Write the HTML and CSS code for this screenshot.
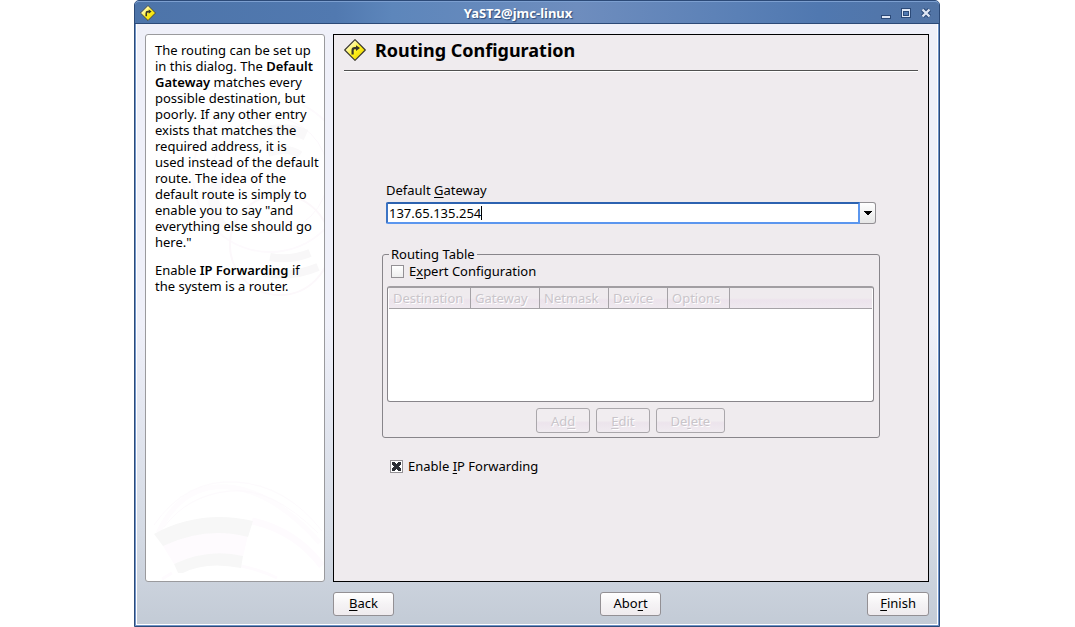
FILE: index.html
```html
<!DOCTYPE html>
<html lang="en">
<head>
<meta charset="utf-8">
<title>YaST2@jmc-linux</title>
<link rel="stylesheet" href="styles.css">
</head>
<body>
<svg class="defs" width="0" height="0" aria-hidden="true">
  <defs>
    <linearGradient id="sign-fill" x1="0" y1="0" x2="1" y2="1">
      <stop offset="0.2" stop-color="#fffbd0"/><stop offset="0.55" stop-color="#fff11a"/><stop offset="1" stop-color="#e0c400"/>
    </linearGradient>
    <symbol id="sign" viewBox="0 0 22 22">
      <path d="M11 .7 21.3 11 11 21.3.7 11z" fill="url(#sign-fill)" stroke="#38362a" stroke-width="1.1" stroke-linejoin="round"/>
      <path d="M8.6 15.5v-4.2q0-2.2 2.2-2.2h1.5" fill="none" stroke="#38362a" stroke-width="2.2"/>
      <path d="M12 6.2 16 9.1 12 12z" fill="#38362a"/>
    </symbol>
  </defs>
</svg>
<div class="window">
  <header class="titlebar">
    <svg class="title-icon" aria-hidden="true"><use href="#sign"/></svg>
    <span class="title">YaST2@jmc-linux</span>
    <div class="window-buttons">
      <button type="button" aria-label="Minimize"><svg viewBox="0 0 12 12"><path d="M1 8h10v4H1z" fill="#2c4a78"/><path d="M2 9h8v2H2z" fill="#dfe7f5"/></svg></button>
      <button type="button" aria-label="Maximize"><svg viewBox="0 0 12 12"><path d="M1 1h10v10H1z" fill="#2c4a78"/><path d="M2 2h8v8H2z" fill="#dfe7f5"/><path d="M3 4h6v5H3z" fill="#2c4a78"/><path d="M4 5h4v3H4z" fill="#5078b0"/></svg></button>
      <button type="button" aria-label="Close"><svg viewBox="0 0 12 12"><path d="m2.5 2.5 7 7m0-7-7 7" stroke="#2c4a78" stroke-width="4.4"/><path d="m2.5 2.5 7 7m0-7-7 7" stroke="#dfe7f5" stroke-width="2.3"/></svg></button>
    </div>
  </header>
  <div class="body">
    <aside class="help">
      <svg class="rings rings-top" viewBox="0 0 178 200" aria-hidden="true">
        <g fill="none">
          <circle cx="124" cy="70" r="77" stroke="#fdfafd" stroke-width="2"/>
          <circle cx="124" cy="70" r="58" stroke="#fcf8fc" stroke-width="1"/>
          <circle cx="134" cy="140" r="50" stroke="#fcf8fb" stroke-width="2"/>
          <path d="M112 30q24-11 48 0" stroke="#f9f8f9" stroke-width="11"/>
          <path d="M122 48q20-7 32 2" stroke="#faf9fa" stroke-width="8"/>
          <path d="M72 74q-10 26 4 48" stroke="#faf9fa" stroke-width="11"/>
          <path d="M124 152q20 4 40-4" stroke="#f8f7f8" stroke-width="8"/>
          <path d="M118 168q28 5 54-6" stroke="#f8f7f8" stroke-width="8"/>
        </g>
      </svg>
      <svg class="rings rings-bottom" viewBox="0 0 178 110" aria-hidden="true">
        <path d="M12 62Q36 12 82 16T174 72" fill="none" stroke="#fefcfe" stroke-width="5"/>
        <path d="M18 56Q42 24 84 20T172 62M8 54Q40 8 90 11T176 60" fill="none" stroke="#fdfafd"/>
        <path d="M106 50Q150 60 176 95" fill="none" stroke="#fefbfe" stroke-width="7"/>
        <path d="M95 95q20 4 36 12M16 108l10-6" fill="none" stroke="#fefbfe" stroke-width="3"/>
        <path d="M17 75Q58 54 102 64L97 86Q63 77 28 93z" fill="#fefbfe"/>
        <path d="M8 63Q54 38 107 50L102 66Q60 55 17 75z" fill="#f7f7f7"/>
        <path d="M28 93Q62 77 97 85L95 97Q60 90 37 102L32 102z" fill="#f7f7f7"/>
      </svg>
      <p>The routing can be set up in this dialog. The <b>Default Gateway</b> matches every possible destination, but poorly. If any other entry exists that matches the required address, it is used instead of the default route. The idea of the default route is simply to enable you to say "and everything else should go here."</p>
      <p>Enable <b>IP Forwarding</b> if the system is a router.</p>
    </aside>
    <main class="panel">
      <div class="heading">
        <svg class="heading-icon" aria-hidden="true"><use href="#sign"/></svg>
        <h1>Routing Configuration</h1>
      </div>
      <form class="form">
        <div class="gateway">
          <label for="gateway">Default <u>G</u>ateway</label>
          <div class="combo">
            <div class="entry"><input id="gateway" type="text" value="137.65.135.254" size="12"></div>
            <button type="button" aria-label="Show choices"><svg viewBox="0 0 8 4"><path d="M0 0h8v1H7v1H6v1H5v1H3V3H2V2H1V1H0z"/></svg></button>
          </div>
        </div>
        <fieldset class="routes">
          <legend>Routing Table</legend>
          <div class="check expert"><input type="checkbox" id="expert"><label for="expert">E<u>x</u>pert Configuration</label></div>
          <div class="table-box">
            <table>
              <colgroup><col class="c-dest"><col class="c-mid"><col class="c-mid"><col class="c-dev"><col class="c-opt"><col></colgroup>
              <thead><tr><th>Destination</th><th>Gateway</th><th>Netmask</th><th>Device</th><th>Options</th><th></th></tr></thead>
            </table>
          </div>
          <div class="actions">
            <button type="button" disabled>Ad<u>d</u></button>
            <button type="button" disabled><u>E</u>dit</button>
            <button type="button" disabled>De<u>l</u>ete</button>
          </div>
        </fieldset>
        <div class="check forwarding"><input type="checkbox" id="forward" checked><label for="forward">Enable <u>I</u>P Forwarding</label></div>
      </form>
    </main>
    <footer class="buttons">
      <button type="button"><u>B</u>ack</button>
      <button type="button">Abo<u>r</u>t</button>
      <button type="button"><u>F</u>inish</button>
    </footer>
  </div>
</div>
</body>
</html>
```
FILE: styles.css
```css
* { box-sizing: border-box; }

body {
  margin: 0;
  padding: 0 135px 0 134px;
  background: #fff;
  color: #000;
  font: 13px/16px "Noto Sans", sans-serif;
}

.defs { position: absolute; }
u { text-underline-offset: 2px; }
button, input { font: inherit; color: inherit; }

.window {
  display: flex;
  flex-direction: column;
  min-height: 100vh;
  border: 1px solid #2c4a78;
  border-radius: 5px 5px 0 0;
  background: #6f93c8;
}

.titlebar {
  display: flex;
  align-items: center;
  height: 23px;
  padding: 0 7px 0 5px;
  border-top: 1px solid #7c9fd0;
  border-bottom: 1px solid #2c4a78;
  border-radius: 4px 4px 0 0;
  background: linear-gradient(90deg, #4d74a9, #5179b0 25%, #5d86bb 32%, #6e8dbe 55%, #5a80b6 75%, #5078b0 85%, #5274a5);
  color: #fff;
}

.title-icon { width: 16px; height: 16px; }

.title {
  flex: 1;
  text-align: center;
  font-weight: 700;
  text-shadow: 1px 1px 1px #2c4a78;
}

.window-buttons { display: flex; gap: 8px; }

.window-buttons button {
  width: 12px;
  height: 12px;
  padding: 0;
  border: 0;
  background: none;
}

.window-buttons svg { display: block; width: 12px; height: 12px; }

.body {
  flex: 1;
  display: grid;
  grid-template: 1fr auto / 180px 1fr;
  gap: 10px 8px;
  margin: 0 1px 1px;
  padding: 10px 8px 8px;
  border: 1px solid #fff;
  border-top: 0;
  background: linear-gradient(#eff0f9 50%, #d4dae4 85%, #c3cbd6);
}

.help {
  position: relative;
  overflow: hidden;
  padding: 7px 5px 7px 9px;
  border: 1px solid #9a9a9d;
  border-radius: 3px;
  background: #fff;
}

.help p { position: relative; margin: 0 0 12px; }
.help b { font-weight: 600; }
.rings { position: absolute; left: 0; width: 100%; }
.rings-top { top: 70px; }
.rings-bottom { bottom: 0; }

.panel {
  display: flex;
  flex-direction: column;
  padding: 0 10px;
  border: 1px solid #000;
  background: #efebee;
}

.heading {
  display: flex;
  align-items: center;
  gap: 9px;
  height: 36px;
  padding-bottom: 6px;
  border-bottom: 1px solid #505050;
  box-shadow: 0 1px #fff;
}

.heading-icon { width: 22px; height: 22px; }
h1 { margin: 0; font-size: 18px; line-height: 24px; }

.form {
  flex: 1;
  display: flex;
  flex-direction: column;
  justify-content: center;
  padding: 4px 38px 0;
}

.gateway { padding: 0 4px; }
.gateway label { display: block; margin-bottom: 4px; }
.combo { display: flex; height: 22px; }

.entry {
  flex: 1;
  display: flex;
  align-items: center;
  border: 2px solid #5b96ee;
  border-color: #2c62b0 #5b96ee #5b96ee #3c74c4;
  border-radius: 2px 0 0 2px;
  background: #fff;
}

.entry input {
  width: 94px;
  height: 14px;
  padding: 0 0 0 1px;
  border: 0;
  border-right: 1px solid #000;
  outline: 0;
  background: none;
}

.combo button {
  display: flex;
  align-items: center;
  justify-content: center;
  width: 16px;
  padding: 0;
  border: 1px solid #939094;
  border-left: 0;
  border-radius: 0 3px 3px 0;
  background: linear-gradient(#fff, #e6e6e6);
}

.combo svg { width: 8px; height: 4px; }

.routes {
  min-width: 0;
  margin: 22px 0 20px;
  padding: 0 5px 4px 4px;
  border: 1px solid #88858a;
  border-radius: 3px;
}

.routes legend { margin-left: 2px; padding: 0 2px; }

.check { display: flex; align-items: center; gap: 5px; padding-left: 4px; }
.expert { padding-top: 1px; }

.check input {
  appearance: none;
  width: 13px;
  height: 13px;
  margin: 0;
  border: 1px solid #939094;
  background: linear-gradient(#fff, #eee);
}

.check input:checked {
  background:
    linear-gradient(45deg, transparent 38%, #2b2e34 38% 62%, transparent 62%) 50% 50% / 9px 9px no-repeat,
    linear-gradient(-45deg, transparent 38%, #2b2e34 38% 62%, transparent 62%) 50% 50% / 9px 9px no-repeat,
    #fff;
}

.table-box {
  height: 116px;
  margin: 7px 0 6px;
  padding: 0 1px;
  border: 1px solid #88858a;
  border-top: 2px solid #a19ea2;
  border-radius: 3px;
  background: #fff;
}

table { width: 100%; table-layout: fixed; border-collapse: separate; border-spacing: 0; }
.c-dest { width: 82px; }
.c-mid { width: 69px; }
.c-dev { width: 59px; }
.c-opt { width: 62px; }

th {
  height: 21px;
  padding: 0 4px;
  border-right: 1px solid #a5a2a6;
  border-bottom: 1px solid #a5a2a6;
  background: linear-gradient(#efebee 50%, #ece3ec 60%, #efe9ef);
  color: #c9c5ca;
  font-weight: 400;
  text-align: left;
  text-shadow: 1px 1px #fff;
}

th:last-child { border-right: 0; }

.actions { display: flex; justify-content: center; gap: 6px; }

.actions button,
.buttons button {
  height: 24px;
  padding: 0 12px 2px;
  border: 1px solid #939094;
  border-radius: 3px;
  background: linear-gradient(#fff, #f5f3f5 50%, #efebee);
}

.actions button {
  height: 25px;
  padding: 0 14px;
  border-color: #aaa7ab;
  background: linear-gradient(#f1edf0 50%, #ece4ec 60%, #f0ebf0);
  color: #c9c5ca;
  text-shadow: 1px 1px #fff;
}

.forwarding { padding-left: 8px; }

.buttons {
  grid-column: 2;
  display: flex;
  justify-content: space-between;
}

.buttons button { min-width: 61px; }
```
